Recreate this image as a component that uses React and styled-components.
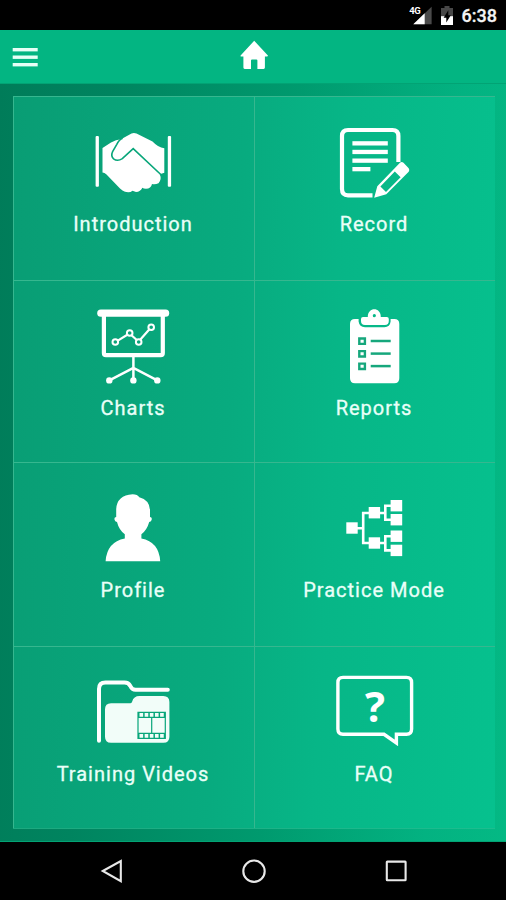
import styled, { createGlobalStyle } from 'styled-components';

const tiles = [
  { id: 'introduction', label: 'Introduction', Icon: IconHandshake },
  { id: 'record', label: 'Record', Icon: IconRecord },
  { id: 'charts', label: 'Charts', Icon: IconCharts },
  { id: 'reports', label: 'Reports', Icon: IconReports },
  { id: 'profile', label: 'Profile', Icon: IconProfile },
  { id: 'practice', label: 'Practice Mode', Icon: IconPractice },
  { id: 'videos', label: 'Training Videos', Icon: IconVideos },
  { id: 'faq', label: 'FAQ', Icon: IconFaq },
];

export default function App() {
  return (
    <Screen>
      <GlobalStyle />
      <StatusBar>
        <IconSignal />
        <IconBattery />
        <Clock>6:38</Clock>
      </StatusBar>
      <Header>
        <HeaderButton aria-label="Menu">
          <IconMenu />
        </HeaderButton>
        <HeaderButton aria-label="Home">
          <IconHome />
        </HeaderButton>
      </Header>
      <Main>
        <Grid>
          {tiles.map(({ id, label, Icon }) => (
            <Tile key={id}>
              <Icon />
              <Label>{label}</Label>
            </Tile>
          ))}
        </Grid>
      </Main>
      <NavBar>
        <NavIcon viewBox="99 859 26 26">
          <path d="M102.8 871 L120.8 861 V881.2 Z" />
        </NavIcon>
        <NavIcon viewBox="241 859 26 26">
          <circle cx="254" cy="871.2" r="10.7" />
        </NavIcon>
        <NavIcon viewBox="383 859 26 26">
          <rect x="386.8" y="861.6" width="18.8" height="18.6" rx="0.5" />
        </NavIcon>
      </NavBar>
    </Screen>
  );
}

function IconSignal() {
  return (
    <svg width="24" height="24" viewBox="410 4 24 24">
      <path d="M414.3 24.2 L432.6 6.8 V24.2 Z" fill="#4a4a4a" />
      <path d="M414.3 24.2 L425.7 13.3 V24.2 Z" fill="#fff" />
      <SmallText x="410.2" y="14">4G</SmallText>
    </svg>
  );
}

function IconBattery() {
  return (
    <svg width="14" height="24" viewBox="441 4 14 24">
      <path d="M442 8 H445.5 V6 H450.5 V8 H454 V25 H442 Z" fill="#484848" />
      <path d="M442 16.2 H454 V25 H442 Z" fill="#fff" />
      <path d="M449.3 10.2 L444.6 17.8 H447.3 V22.6 L451.8 15.2 H449.3 Z" fill="#000" />
    </svg>
  );
}

function IconMenu() {
  return (
    <svg width="26" height="26" viewBox="12 44 26 26" fill="#e6fff6">
      <rect x="12.7" y="48" width="25" height="3.4" />
      <rect x="12.7" y="55.5" width="25" height="3.4" />
      <rect x="12.7" y="63" width="25" height="3.4" />
    </svg>
  );
}

function IconHome() {
  return (
    <svg width="30" height="33" viewBox="239 40 30 33" fill="#fff">
      <path d="M254.2 40.7 L267.9 55.6 Q268 56.6 267 56.6 H264.9 V67.6 Q264.9 69 263.6 69 H257.4 V60.4 Q257.4 59.4 256.4 59.4 H252 Q251 59.4 251 60.4 V69 H244.7 Q243.4 69 243.4 67.6 V56.6 H241.3 Q240.3 56.6 240.6 55.6 Z" />
    </svg>
  );
}

function IconHandshake() {
  return (
    <TileIcon viewBox="94 120 80 80">
      <rect x="95.6" y="136" width="3.3" height="50.8" rx="1" />
      <rect x="167.8" y="136" width="3.3" height="50.8" rx="1" />
      <path d="M102.5 148 L111 142.5 Q116 139.5 121 139.3 L131.5 133.5 Q134 132.4 136.5 133.6 L152.5 141.5 Q158 147.4 164.3 148.3 V172.8 L159.8 174.2 Q162 179.4 158.5 183.2 Q155 185 152 184 Q151 188.7 146 188.8 Q143.5 188.6 142.4 187.7 Q140.5 191.8 136 191.9 L132.5 190.7 Q130 193 125 191.8 Q122.5 190.8 120 188.5 L106.5 174.5 Q104.5 172.6 102.5 172.6 Z" />
      <Cut d="M122.6 138.2 Q119 139.6 116.8 144.4 L112.6 151.6 Q110.6 156 113.6 158.8 Q117.5 161.8 122.3 158.6 L133.2 148.6 L161.3 175" $width={1.6} />
    </TileIcon>
  );
}

function IconRecord() {
  return (
    <TileIcon viewBox="335 120 80 80">
      <Stroke d="M398.4 162 V136 Q398.4 130 392.4 130 H348 Q342 130 342 136 V189 Q342 195.3 348 195.3 H372.5" $width={4.2} />
      <rect x="352.4" y="141.2" width="35.4" height="4.3" />
      <rect x="352.4" y="149.8" width="35.4" height="4.3" />
      <rect x="352.4" y="158.5" width="35.4" height="4.3" />
      <rect x="352.4" y="167" width="18" height="4.3" />
      <path
        fillRule="evenodd"
        d="M374.2 197.8 L377.3 186.2 L400.2 162.6 Q401.8 161.4 403.5 162.8 L408.7 168.2 Q410 170 408.7 171.8 L386.3 194.2 Z M380.4 186.6 L386 192 L400.6 177.2 L394.8 171.4 Z"
      />
    </TileIcon>
  );
}

function IconCharts() {
  return (
    <TileIcon viewBox="94 304 80 80">
      <rect x="97.2" y="309.4" width="72" height="7.4" rx="3.6" />
      <Stroke d="M103.9 316 V353 Q103.9 355.2 106 355.2 H160.7 Q162.8 355.2 162.8 353 V316" $width={4.2} />
      <Stroke d="M117.8 340.6 L127.3 334.7 M131.5 335.2 L136.8 340 M140.4 339.6 L149.2 329.6" $width={2.2} />
      <Stroke d="M133.4 357 V380 M109.4 380.4 L133.4 367.8 L157.3 380.4" $width={2.5} />
      <Ring cx="115.3" cy="342" r="2.8" />
      <Ring cx="129.7" cy="333" r="2.8" />
      <Ring cx="138.7" cy="342" r="2.8" />
      <Ring cx="151.2" cy="327.3" r="2.8" />
      <circle cx="109.3" cy="380.4" r="3.2" />
      <circle cx="133.4" cy="380.4" r="3.2" />
      <circle cx="157.3" cy="380.4" r="3.2" />
    </TileIcon>
  );
}

function IconReports() {
  return (
    <TileIcon viewBox="335 304 80 80">
      <path d="M355 319 H358.6 V321.5 Q359.4 327.2 365 327.2 H384.4 Q390 327.2 390.6 321.5 V319 H394.3 Q399.3 319 399.3 324 V378.3 Q399.3 383.3 394.3 383.3 H355 Q350 383.3 350 378.3 V324 Q350 319 355 319 Z" />
      <path
        fillRule="evenodd"
        d="M363 317 H367.8 C367.8 306.8 380.8 306.8 380.8 317 H386.8 Q388.8 317 388.8 319 V321 Q388.8 325 384.8 325 H365 Q361 325 361 321 V319 Q361 317 363 317 Z M374.3 314 A1.6 1.6 0 1 0 374.4 317.2 A1.6 1.6 0 1 0 374.3 314 Z"
      />
      {[341.2, 353.8, 366.3].map((y) => (
        <g key={y}>
          <Cut d={`M359.3 ${y - 2.7} h5.6 v5.4 h-5.6 Z`} $width={2.4} $color="#16a77c" />
          <Cut d={`M370.7 ${y - 0.2} h20`} $width={2.5} $color="#16a77c" />
        </g>
      ))}
    </TileIcon>
  );
}

function IconProfile() {
  return (
    <TileIcon viewBox="94 486 80 80">
      <path d="M132.6 494.3 Q137.5 494.4 139.3 497.3 Q149.5 500 150 510 V517 Q152.2 517 151.7 519.5 Q151.5 521.8 149.2 522 Q147 530 141.4 534.3 V538.6 Q159 542 160.2 561.2 H105.6 Q107 542 124.8 538.6 V534.3 Q119 530 117 522 Q114.8 521.8 114.5 519.5 Q114 517 116.2 517 V509 Q117 495.4 132.6 494.3 Z" />
    </TileIcon>
  );
}

function IconPractice() {
  return (
    <TileIcon viewBox="335 486 80 80">
      <rect x="346.3" y="522.3" width="11.4" height="11.4" />
      <rect x="368.7" y="507" width="11.4" height="11.4" />
      <rect x="368.7" y="537.3" width="11.4" height="11.4" />
      <rect x="390.6" y="500" width="11.6" height="11.4" />
      <rect x="390.6" y="514" width="11.6" height="11.4" />
      <rect x="390.6" y="530.5" width="11.6" height="11.4" />
      <rect x="390.6" y="544.7" width="11.6" height="11.4" />
      <Stroke d="M357 528.2 H363.2 M369 513 H363.2 V543 H369 M380 513 H385.3 M391 505.7 H385.3 V519.8 H391 M380 543 H385.3 M391 536.2 H385.3 V550.4 H391" $width={2.6} />
    </TileIcon>
  );
}

function IconVideos() {
  return (
    <TileIcon viewBox="94 670 80 80">
      <Stroke d="M99 740.8 V689 Q99 682.6 105.5 682.6 H124.5 Q128.5 682.6 130.3 686 Q132 689.8 135.5 689.8 H167.8" $width={4} $round />
      <path d="M111 703.3 H130.5 Q131.8 703.3 132.2 701.5 Q133.6 696 139.5 696 H163.3 Q169.4 696 169.4 702 V736.8 Q169.4 742.8 163.4 742.8 H111 Q105 742.8 105 736.8 V709.3 Q105 703.3 111 703.3 Z" fill="#f2fdf9" />
      <Cut d="M138 712.4 H165.3 V738.3 H138 Z M138 717.4 H165.3 M138 733.3 H165.3 M151.7 717.4 V733.3" $width={1.2} />
      <Cut d="M138 714.9 H165.3 M138 735.8 H165.3" $width={5} $dash="1.5 3.65" />
    </TileIcon>
  );
}

function IconFaq() {
  return (
    <TileIcon viewBox="335 670 80 80">
      <Stroke d="M343 677.4 H406.5 Q411.6 677.4 411.6 682.5 V729 Q411.6 734.3 406.5 734.3 H396.4 V743 L384 734.3 H343 Q337.9 734.3 337.9 729 V682.5 Q337.9 677.4 343 677.4 Z" $width={3.4} />
      <QuestionMark x="374.9" y="722.2">?</QuestionMark>
    </TileIcon>
  );
}

const GlobalStyle = createGlobalStyle`
  body {
    margin: 0;
    background: #000;
  }
`;

const Screen = styled.div`
  display: flex;
  flex-direction: column;
  width: 506px;
  height: 900px;
  overflow: hidden;
  font-family: Roboto, "Liberation Sans", sans-serif;
  color: #e9fff8;
`;

const StatusBar = styled.div`
  display: flex;
  align-items: center;
  justify-content: flex-end;
  gap: 7px;
  height: 30px;
  padding: 2px 9px 0 0;
  box-sizing: border-box;
  background: #000;
`;

const Clock = styled.span`
  margin-left: 1px;
  font-size: 18px;
  font-weight: 500;
  line-height: 24px;
  color: #f4f4f4;
  -webkit-text-stroke: 0.3px #f4f4f4;
`;

const Header = styled.header`
  display: grid;
  grid-template-columns: 227px 30px 1fr;
  align-items: center;
  height: 53px;
  padding: 0 12px;
  box-sizing: border-box;
  background: #03b582;
`;

const HeaderButton = styled.button`
  display: flex;
  padding: 0;
  border: none;
  background: none;
`;

const Main = styled.main`
  height: 759px;
  padding: 12px 11px 13px 13px;
  box-sizing: border-box;
  border-top: 1px solid #02a374;
  border-bottom: 1px solid #02a374;
  background: linear-gradient(93deg, #007c59 0%, #00845f 20%, #009a6e 55%, #03b281 85%, #04b984 100%);
`;

const Grid = styled.div`
  display: grid;
  grid-template-columns: 241px 241px;
  grid-template-rows: 184px 182px 184px 182px;
  background: linear-gradient(93deg, #099d74 0%, #08ab7f 45%, #07b687 65%, #06c18e 100%);
  border-bottom: 1px solid rgba(70, 190, 150, 0.35);
`;

const Tile = styled.div`
  display: flex;
  flex-direction: column;
  align-items: center;
  padding-top: 23px;
  box-sizing: border-box;
  border-top: 1px solid #36b78f;
  border-left: 1px solid #36b78f;
`;

const TileIcon = styled.svg`
  width: 80px;
  height: 80px;
  fill: #fff;
`;

const Label = styled.div`
  margin: 11.5px 2px 0 0;
  font-size: 20px;
  line-height: 24px;
  letter-spacing: 1px;
  white-space: nowrap;
  -webkit-text-stroke: 0.3px #e9fff8;
`;

const Stroke = styled.path`
  fill: none;
  stroke: #fff;
  stroke-width: ${props => props.$width};
  stroke-linecap: ${props => (props.$round ? 'round' : 'butt')};
`;

const Cut = styled.path`
  fill: none;
  stroke: ${props => props.$color || '#08a67a'};
  stroke-width: ${props => props.$width};
  stroke-dasharray: ${props => props.$dash || 'none'};
`;

const Ring = styled.circle`
  fill: none;
  stroke: #fff;
  stroke-width: 2;
`;

const SmallText = styled.text`
  font-size: 9.5px;
  font-weight: 700;
  letter-spacing: -0.5px;
  fill: #fff;
`;

const QuestionMark = styled.text`
  font-family: "Open Sans", "Noto Sans", sans-serif;
  font-size: 42px;
  font-weight: 700;
  text-anchor: middle;
`;

const NavBar = styled.nav`
  display: flex;
  align-items: center;
  justify-content: center;
  gap: 116px;
  height: 58px;
  padding: 1px 0 0 2px;
  box-sizing: border-box;
  background: #000;
`;

const NavIcon = styled.svg`
  width: 26px;
  height: 26px;
  fill: none;
  stroke: #e8e8e8;
  stroke-width: 2.1;
`;
